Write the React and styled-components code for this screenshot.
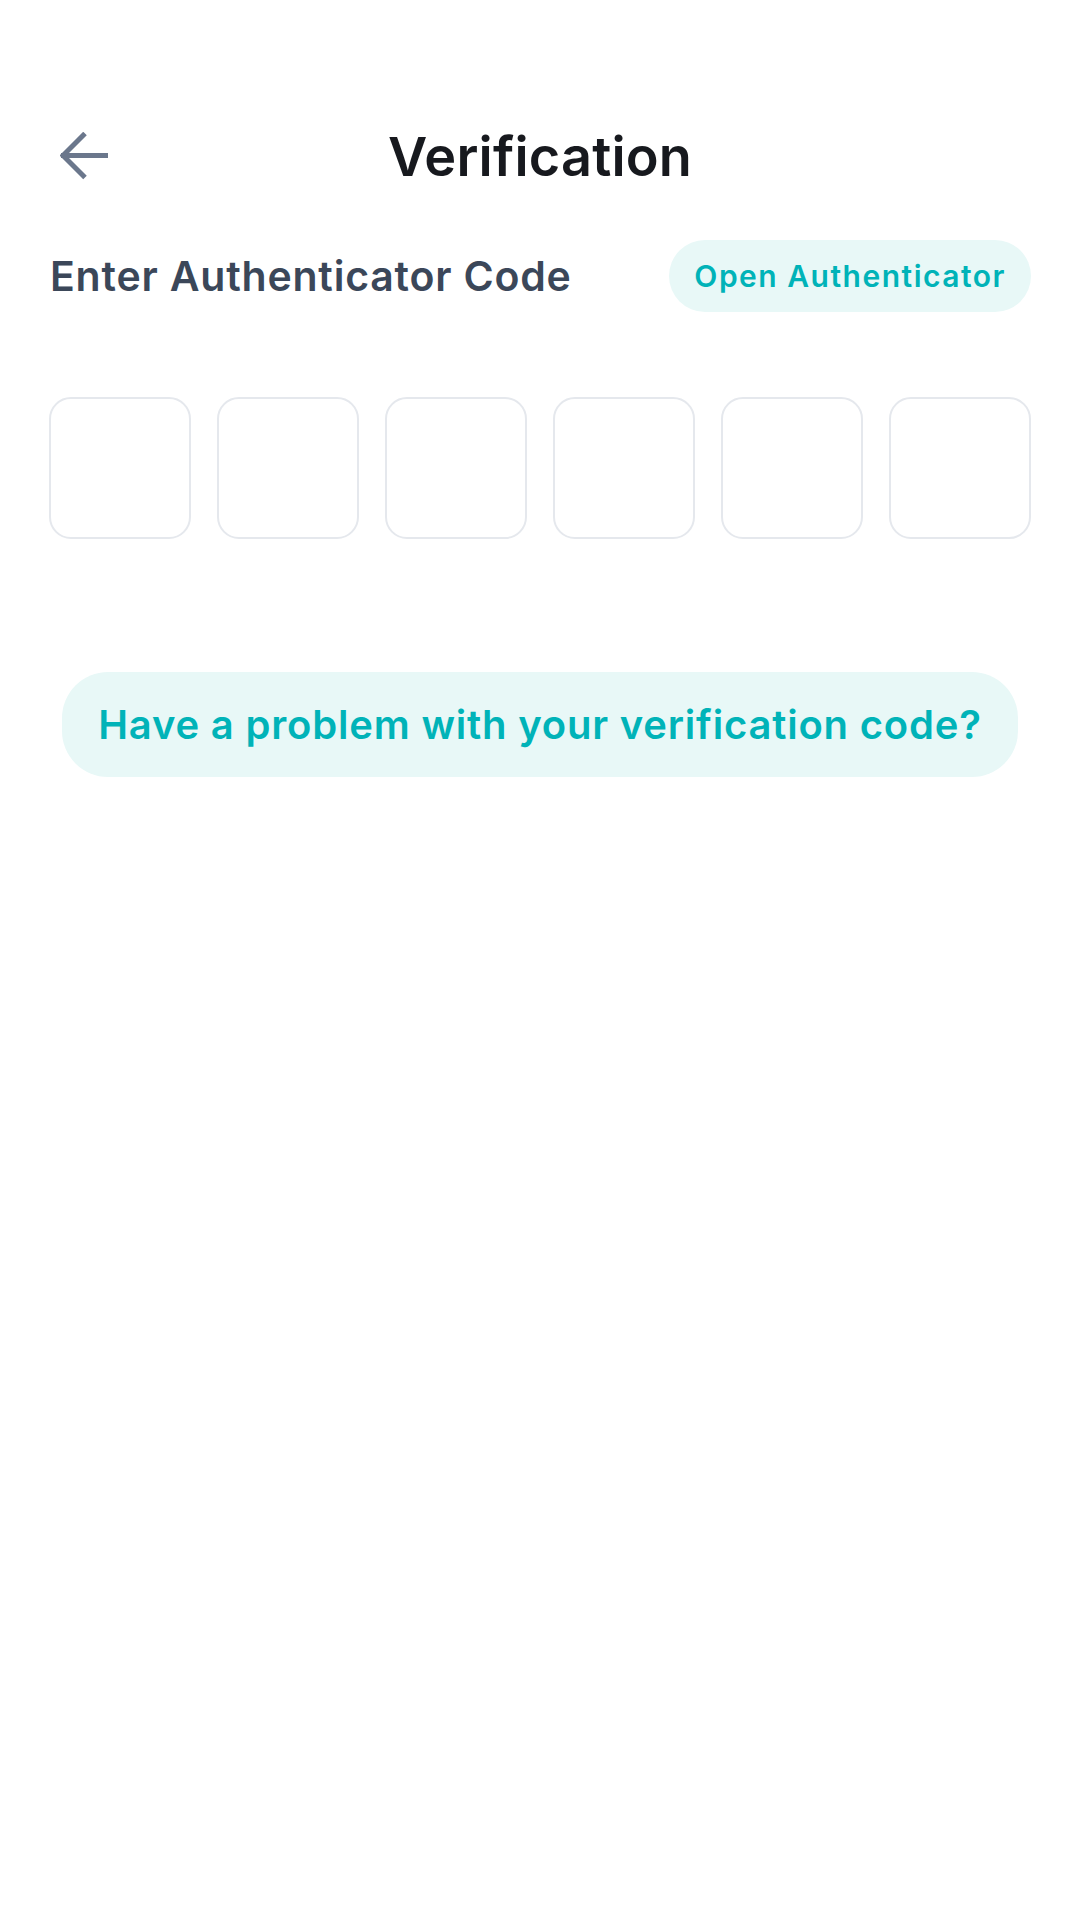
import React, { useState } from "react";
import styled, { createGlobalStyle } from "styled-components";

const GlobalStyle = createGlobalStyle`
  html, body {
    margin: 0;
    padding: 0;
    background: #ffffff;
  }
  body {
    font-family: Inter, "Noto Sans", "Liberation Sans", sans-serif;
  }
  * {
    box-sizing: border-box;
  }
`;

const Page = styled.div`
  width: 1080px;
  min-height: 1920px;
  padding: 116px 49px 0;
  background: #ffffff;
`;

const Header = styled.header`
  display: grid;
  grid-template-columns: 1fr auto 1fr;
  align-items: center;
  height: 80px;
`;

const BackButton = styled.button`
  justify-self: start;
  display: flex;
  align-items: center;
  padding: 0 0 0 11px;
  border: none;
  background: none;
  cursor: pointer;
  color: #6b778c;
`;

const Title = styled.h1`
  margin: 0;
  font-size: 54px;
  font-weight: 600;
  letter-spacing: 0.2px;
  color: #17191e;
`;

const LabelRow = styled.div`
  display: flex;
  align-items: center;
  justify-content: space-between;
  margin-top: 44px;
`;

const Label = styled.span`
  padding-left: 1px;
  font-size: 41px;
  font-weight: 600;
  letter-spacing: 0.8px;
  color: #3b4759;
`;

const Pill = styled.button`
  height: 72px;
  padding: 0 25px;
  border: none;
  border-radius: 36px;
  background: #e8f8f7;
  color: #00b3b8;
  font-family: inherit;
  font-size: 30px;
  font-weight: 600;
  letter-spacing: 1.5px;
  cursor: pointer;
`;

const CodeRow = styled.div`
  display: grid;
  grid-template-columns: repeat(6, 1fr);
  gap: 26px;
  margin-top: 85px;
`;

const CodeBox = styled.input`
  width: 100%;
  height: 142px;
  border: 2.5px solid #e5e8ed;
  border-radius: 22px;
  background: #ffffff;
  text-align: center;
  font-family: inherit;
  font-size: 56px;
  font-weight: 600;
  color: #17191e;
  outline: none;

  &:focus {
    border-color: #00b3b8;
  }
`;

const HelpButton = styled.button`
  display: block;
  width: 956px;
  height: 105px;
  margin: 133px auto 0;
  border: none;
  border-radius: 46px;
  background: #e8f8f7;
  color: #00b3b8;
  font-family: inherit;
  font-size: 40px;
  font-weight: 600;
  letter-spacing: 0.8px;
  cursor: pointer;
`;

function ArrowLeft() {
  return (
    <svg width="50" height="48" viewBox="0 0 50 48" fill="none">
      <path d="M1 23.5H48" stroke="currentColor" strokeWidth="5" />
      <path
        d="M25 1.5L3 23.5L25 45.5"
        stroke="currentColor"
        strokeWidth="5"
        strokeLinejoin="miter"
      />
    </svg>
  );
}

export default function App() {
  const [code, setCode] = useState(["", "", "", "", "", ""]);

  const handleChange = (index, value) => {
    const next = [...code];
    next[index] = value.slice(-1);
    setCode(next);
  };

  return (
    <>
      <GlobalStyle />
      <Page>
        <Header>
          <BackButton aria-label="Back">
            <ArrowLeft />
          </BackButton>
          <Title>Verification</Title>
          <span />
        </Header>

        <LabelRow>
          <Label>Enter Authenticator Code</Label>
          <Pill>Open Authenticator</Pill>
        </LabelRow>

        <CodeRow>
          {code.map((digit, i) => (
            <CodeBox
              key={i}
              inputMode="numeric"
              value={digit}
              onChange={(e) => handleChange(i, e.target.value)}
            />
          ))}
        </CodeRow>

        <HelpButton>Have a problem with your verification code?</HelpButton>
      </Page>
    </>
  );
}
